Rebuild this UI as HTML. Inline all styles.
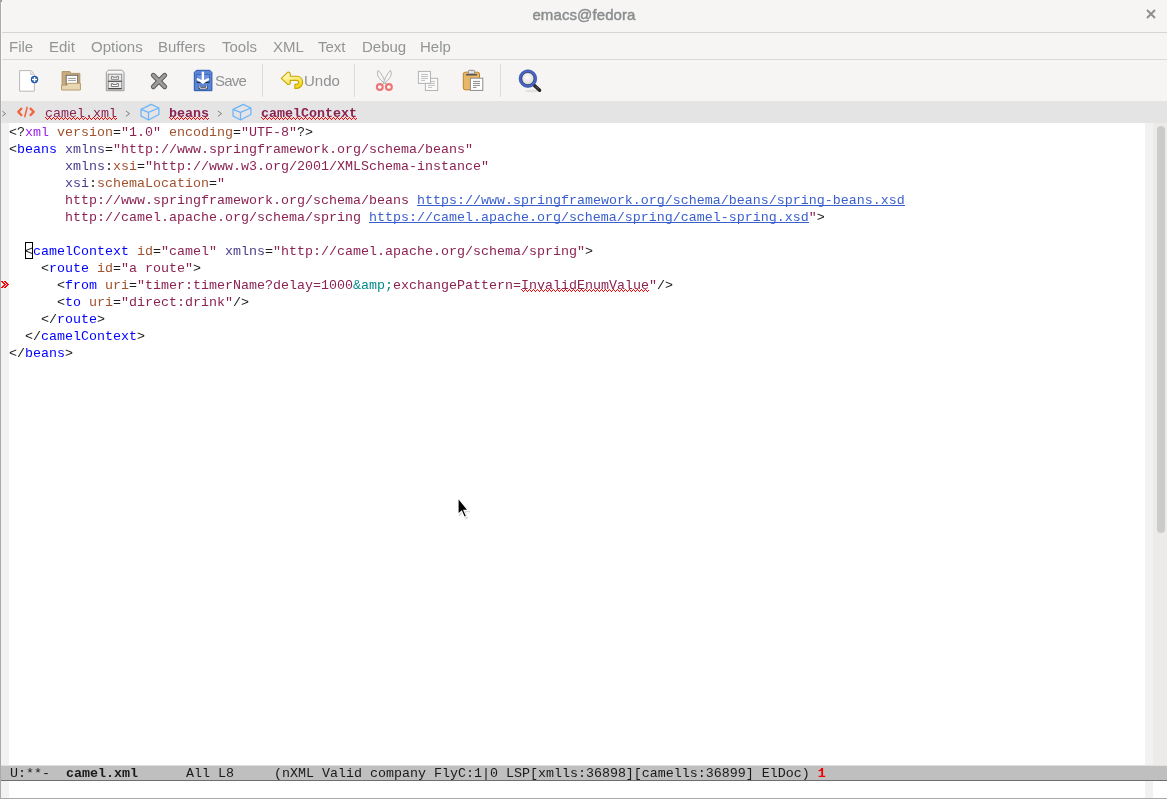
<!DOCTYPE html>
<html><head><meta charset="utf-8">
<style>
*{margin:0;padding:0;box-sizing:border-box}
html,body{width:1167px;height:799px;overflow:hidden;background:#f6f5f4;position:relative}
.abs{position:absolute}
.mono,.mi,.tl,.t{will-change:transform}
#lborder{left:0;top:0;width:1px;height:799px;background:#a9a9a9}
#title{left:1px;top:0;width:1166px;height:33px;background:#f6f5f4;border-bottom:1px solid #d8d4d0}
#title .t{position:absolute;left:0;width:1166px;top:6px;text-align:center;font:15px "Liberation Sans",sans-serif;color:#8a8d8e;-webkit-text-stroke:0.45px #8a8d8e;letter-spacing:0.1px}
#close{left:1143px;top:9px;width:14px;height:14px}
#menu{left:1px;top:33px;width:1166px;height:27px;border-bottom:1px solid #dcd8d4}
.mi{position:absolute;top:5px;font:15px "Liberation Sans",sans-serif;color:#929595}
#tool{left:1px;top:60px;width:1166px;height:41px}
.sep{position:absolute;top:64px;width:1px;height:33px;background:#dedbd8}
.tl{position:absolute;top:72px;font:15px "Liberation Sans",sans-serif;color:#8f9192}
#hdr{left:1px;top:101px;width:1166px;height:22px;background:#e4e4e4}
.mono{font-family:"Liberation Mono",monospace;font-size:13.333px;white-space:pre;line-height:17px}
#text{left:1px;top:123px;width:1144px;height:642px;background:#fff}
#lfr{left:1px;top:123px;width:8px;height:642px;background:#f2f2f2}
#rfr{left:1145px;top:123px;width:8px;height:642px;background:#f2f2f2}
#sb{left:1153px;top:123px;width:14px;height:642px;background:#edebe9}
#thumb{left:1157px;top:126px;width:8px;height:407px;background:#cbcbcb;border-radius:4px}
#code{left:9px;top:124px;color:#2b2b2b}
#ml{left:1px;top:765px;width:1166px;height:16px;background:#bfbfbf;border-top:1px solid #e0e0e0;border-bottom:1px solid #6e6e6e}
#echo{left:1px;top:781px;width:1166px;height:17px;background:#fff}
#efl{left:1px;top:781px;width:8px;height:17px;background:#f2f2f2}
#efr{left:1145px;top:781px;width:8px;height:17px;background:#f2f2f2}
#bb{left:0;top:798px;width:1167px;height:1px;background:#a9a9a9}
.k{color:#1c1c1c}
.kw{color:#a020f0}
.fn{color:#0000ff}
.at{color:#a0522d}
.ns{color:#483d8b}
.st{color:#8b2252}
.cn{color:#008b8b}
.ln{color:#3a5fcd}
</style></head><body>
<div id="title" class="abs"><div class="t">emacs@fedora</div></div>
<div id="menu" class="abs"></div>
<div class="mi" style="left:9px;top:38px">File</div>
<div class="mi" style="left:49px;top:38px">Edit</div>
<div class="mi" style="left:91px;top:38px">Options</div>
<div class="mi" style="left:158px;top:38px">Buffers</div>
<div class="mi" style="left:222px;top:38px">Tools</div>
<div class="mi" style="left:273px;top:38px">XML</div>
<div class="mi" style="left:318px;top:38px">Text</div>
<div class="mi" style="left:362px;top:38px">Debug</div>
<div class="mi" style="left:420px;top:38px">Help</div>

<div class="sep" style="left:262px"></div>
<div class="sep" style="left:354px"></div>
<div class="sep" style="left:500px"></div>
<div class="tl" style="left:215px;letter-spacing:-0.8px">Save</div>
<div class="tl" style="left:304px">Undo</div>

<div id="hdr" class="abs"></div>
<div class="abs mono hd" style="left:45px;top:105px;color:#8b2252">camel.xml</div>
<div class="abs mono hd" style="left:169px;top:105px;color:#8b2252;font-weight:bold">beans</div>
<div class="abs mono hd" style="left:261px;top:105px;color:#8b2252;font-weight:bold">camelContext</div>
<div id="text" class="abs"></div>
<div id="lfr" class="abs"></div>
<div id="rfr" class="abs"></div>
<div id="sb" class="abs"></div>
<div id="thumb" class="abs"></div>
<svg class="abs" style="left:0;top:0" width="1167" height="130">
<defs>
<linearGradient id="gcab" x1="0" y1="0" x2="0" y2="1"><stop offset="0" stop-color="#fafafa"/><stop offset="1" stop-color="#d6d6d6"/></linearGradient>
<radialGradient id="glens" cx="0.45" cy="0.4" r="0.6"><stop offset="0" stop-color="#ffffff"/><stop offset="1" stop-color="#d8d8d8"/></radialGradient>
<linearGradient id="gundo" x1="0" y1="0" x2="0.4" y2="1"><stop offset="0" stop-color="#fffbd8"/><stop offset="0.5" stop-color="#fbef8a"/><stop offset="1" stop-color="#f2d820"/></linearGradient>
</defs>
<!-- close x -->
<path d="M1147,10 L1155,18 M1155,10 L1147,18" stroke="#8c8c8c" stroke-width="1.8"/>
<!-- new file -->
<path d="M19.6,70.6 H31.2 L34.3,74.6 V91.2 H19.6 Z" fill="#fff" stroke="#b8b8b8" stroke-width="1"/>
<path d="M30.6,71.5 V74.5 H33.3" fill="#eee" stroke="#c8c8c8" stroke-width="1"/>
<circle cx="34.5" cy="79.5" r="3.7" fill="#2158aa"/>
<path d="M32,79.5 H37 M34.5,77 V82" stroke="#fff" stroke-width="1.4"/>
<!-- open folder -->
<path d="M62.1,89.5 V71.6 H70 L71.1,73.4 H79.8 V89.5 Z" fill="#c9ab7e" stroke="#b09266" stroke-width="1"/>
<rect x="66.2" y="75.3" width="11.5" height="9" fill="#fff" stroke="#6a6a6a" stroke-width="1"/>
<path d="M68.2,78.4 H76 M68.2,80.4 H76" stroke="#9a9a9a" stroke-width="1"/>
<path d="M61.6,90 V85.1 H67 L68,83.3 H80.4 V90 Z" fill="#e9d6b2" stroke="#b89c6e" stroke-width="1" stroke-linejoin="round"/>
<!-- cabinet -->
<path d="M106.3,90.7 V72.2 L108.5,70.2 H121.8 L124,72.2 V90.7 Z" fill="url(#gcab)" stroke="#999" stroke-width="1"/>
<rect x="108.2" y="74.2" width="13.5" height="7.2" fill="#eaeaea" stroke="#8e8e8e" stroke-width="1"/>
<rect x="108.2" y="81.4" width="13.5" height="7.2" fill="#eaeaea" stroke="#8e8e8e" stroke-width="1"/>
<path d="M108.2,81.2 H121.7 M108.2,88.6 H121.7" stroke="#4a4a4a" stroke-width="1.1"/>
<path d="M111.4,76.4 H113 V77.3 H116.8 V76.4 H118.4 V79.3 H111.4 Z" fill="#fff" stroke="#707070" stroke-width="0.9" stroke-linejoin="round"/>
<path d="M111.4,83.6 H113 V84.5 H116.8 V83.6 H118.4 V86.5 H111.4 Z" fill="#fff" stroke="#707070" stroke-width="0.9" stroke-linejoin="round"/>
<!-- X -->
<path d="M153.3,75.3 L164.7,86.7 M164.7,75.3 L153.3,86.7" stroke="#5a5a5a" stroke-width="4.9" stroke-linecap="round"/>
<path d="M153.3,75.3 L164.7,86.7 M164.7,75.3 L153.3,86.7" stroke="#9d9d9d" stroke-width="2.9" stroke-linecap="round"/>
<!-- save -->
<path d="M194.3,90.7 V72.4 L196.4,70.3 H209.9 L211.9,72.4 V90.7 Z" fill="#5b84d6" stroke="#2458a8" stroke-width="1"/>
<rect x="196.8" y="74.5" width="12.6" height="8.3" fill="#6a90de" stroke="#3a66b8" stroke-width="0.8"/>
<path d="M197,82.3 H209.2" stroke="#2a2a2a" stroke-width="1.2"/>
<path d="M202.9,72.6 V81.5 M197.8,79.3 Q200.5,80.2 202.9,82.6 Q205.3,80.2 208,79.3" stroke="#fff" stroke-width="2.4" fill="none" stroke-linecap="round" stroke-linejoin="round"/>
<path d="M199.9,85.4 V88.2 H206.3 V85.4" fill="none" stroke="#2a2a2a" stroke-width="2.2"/>
<path d="M199.9,85.4 V88.2 H206.3 V85.4" fill="none" stroke="#fff" stroke-width="1"/>
<!-- undo -->
<path d="M281.3,78.4 L287.6,72.3 Q289.3,71.6 290.2,73.3 L290.3,76.3 H297 C300.5,76.3 302.6,79 302.6,82.4 C302.6,85.8 299.5,88.5 296,88.5 H294.9 V84.3 H296 C297.6,84.3 298.6,83.3 298.6,82.4 C298.6,81.4 297.8,80.4 296.5,80.4 H290.3 L290.2,83.4 Q289.3,85 287.6,84.4 Z" fill="url(#gundo)" stroke="#c8a400" stroke-width="1.1" stroke-linejoin="round"/>
<!-- scissors -->
<path d="M378.2,70.4 C376.3,74.5 377.8,78.5 386,84.2 C384,78.5 381.8,73.8 378.2,70.4 Z" fill="#f6f6f6" stroke="#a8a8a8" stroke-width="0.85"/>
<path d="M390.5,70.4 C392.4,74.5 390.9,78.5 383,84.2 C384.8,78.5 387,73.8 390.5,70.4 Z" fill="#f6f6f6" stroke="#a8a8a8" stroke-width="0.85"/>
<circle cx="379.8" cy="87" r="2.9" fill="#fff" fill-opacity="0.6" stroke="#ec7474" stroke-width="2.1"/>
<circle cx="388.9" cy="87" r="2.9" fill="#fff" fill-opacity="0.6" stroke="#ec7474" stroke-width="2.1"/>
<!-- copy -->
<rect x="425.4" y="78.3" width="12.3" height="12.2" fill="#fafafa" stroke="#b3b3b3" stroke-width="1"/>
<path d="M428,81.4 H435 M428,83.4 H435 M428,85.4 H435 M428,87.4 H432" stroke="#c0c0c0" stroke-width="1"/>
<rect x="418.4" y="71.4" width="12.1" height="12" fill="#fafafa" stroke="#b3b3b3" stroke-width="1"/>
<path d="M421,74.4 H428 M421,76.4 H428 M421,78.4 H428 M421,80.4 H425" stroke="#c0c0c0" stroke-width="1"/>
<!-- paste -->
<rect x="463.3" y="72.2" width="16.2" height="17.6" rx="1.8" fill="#e9b665" stroke="#b9832e" stroke-width="1"/>
<rect x="468.3" y="70.3" width="6.4" height="3.6" rx="1" fill="#e4e4e4" stroke="#8a8a8a" stroke-width="1"/>
<path d="M466.5,74.8 H476.5" stroke="#555" stroke-width="1.5" stroke-linecap="round"/>
<rect x="470.4" y="78.2" width="12.4" height="12.2" fill="#fff" stroke="#8d8d8d" stroke-width="1"/>
<path d="M473,81.4 H480 M473,83.4 H480 M473,85.4 H480 M473,87.4 H476.5" stroke="#8a8a8a" stroke-width="1"/>
<!-- search -->
<ellipse cx="532" cy="91" rx="7" ry="1.5" fill="#000" opacity="0.08"/>
<circle cx="527.9" cy="78.6" r="6.2" fill="url(#glens)"/>
<path d="M533.9,85 L539.6,90.3" stroke="#252525" stroke-width="3.4" stroke-linecap="round"/>
<circle cx="527.9" cy="78.6" r="7.5" fill="none" stroke="#4566c8" stroke-width="2.9"/>
<circle cx="527.9" cy="78.6" r="8.8" fill="none" stroke="#2b4390" stroke-width="0.7" opacity="0.8"/>
<circle cx="527.9" cy="78.6" r="6.1" fill="none" stroke="#202040" stroke-width="0.9" opacity="0.75"/>
<path d="M535.6,86.2 L538.6,89" stroke="#6a6a6a" stroke-width="0.8" stroke-linecap="round"/>
<!-- header line -->
<path d="M2.3,111.2 L5.6,113.6 L2.3,116.2" fill="none" stroke="#7d7d7d" stroke-width="1"/>
<path d="M22,108 L18.3,111.9 L22,115.8 M29.9,108 L33.7,111.9 L29.9,115.8" fill="none" stroke="#f2643f" stroke-width="2.3" stroke-linejoin="round"/>
<path d="M27.3,106.8 L24.6,117.2" stroke="#f2643f" stroke-width="1.5"/>
<path d="M125.9,111 L129.6,113.6 L125.9,116.3 M217.9,111 L221.6,113.6 L217.9,116.3" fill="none" stroke="#7d7d7d" stroke-width="1"/>
<path d="M151.3,104.3 L141,109.3 L148.5,112.4 L158.9,108 Z M141,109.3 V115.9 L148.5,120 L158.9,114.5 V108 M148.5,112.4 V120" fill="none" stroke="#6fb4fb" stroke-width="1.3" stroke-linejoin="round"/>
<path d="M243.3,104.3 L233,109.3 L240.5,112.4 L250.9,108 Z M233,109.3 V115.9 L240.5,120 L250.9,114.5 V108 M240.5,112.4 V120" fill="none" stroke="#6fb4fb" stroke-width="1.3" stroke-linejoin="round"/>
</svg>
<div id="code" class="abs mono"><span class="k">&lt;?</span><span class="kw">xml</span> <span class="at">version</span><span class="k">=</span><span class="st">"1.0"</span> <span class="at">encoding</span><span class="k">=</span><span class="st">"UTF-8"</span><span class="k">?&gt;</span>
<span class="k">&lt;</span><span class="fn">beans</span> <span class="ns">xmlns</span><span class="k">=</span><span class="st">"http://www.springframework.org/schema/beans"</span>
       <span class="ns">xmlns</span><span class="k">:</span><span class="at">xsi</span><span class="k">=</span><span class="st">"http://www.w3.org/2001/XMLSchema-instance"</span>
       <span class="ns">xsi</span><span class="k">:</span><span class="at">schemaLocation</span><span class="k">=</span><span class="st">"</span>
<span class="st">       http://www.springframework.org/schema/beans </span><span class="ln">https://www.springframework.org/schema/beans/spring-beans.xsd</span>
<span class="st">       http://camel.apache.org/schema/spring </span><span class="ln">https://camel.apache.org/schema/spring/camel-spring.xsd</span><span class="st">"</span><span class="k">&gt;</span>

  <span class="k">&lt;</span><span class="fn">camelContext</span> <span class="at">id</span><span class="k">=</span><span class="st">"camel"</span> <span class="ns">xmlns</span><span class="k">=</span><span class="st">"http://camel.apache.org/schema/spring"</span><span class="k">&gt;</span>
    <span class="k">&lt;</span><span class="fn">route</span> <span class="at">id</span><span class="k">=</span><span class="st">"a route"</span><span class="k">&gt;</span>
      <span class="k">&lt;</span><span class="fn">from</span> <span class="at">uri</span><span class="k">=</span><span class="st">"timer:timerName?delay=1000</span><span class="cn">&amp;amp;</span><span class="st">exchangePattern=InvalidEnumValue"</span><span class="k">/&gt;</span>
      <span class="k">&lt;</span><span class="fn">to</span> <span class="at">uri</span><span class="k">=</span><span class="st">"direct:drink"</span><span class="k">/&gt;</span>
    <span class="k">&lt;/</span><span class="fn">route</span><span class="k">&gt;</span>
  <span class="k">&lt;/</span><span class="fn">camelContext</span><span class="k">&gt;</span>
<span class="k">&lt;/</span><span class="fn">beans</span><span class="k">&gt;</span></div>

<svg class="abs" style="left:0;top:0" width="1167" height="300" shape-rendering="crispEdges">
<path d="M45,117h1v1h-1zM46,118h1v1h-1zM47,119h1v1h-1zM48,118h1v1h-1zM49,117h1v1h-1zM50,118h1v1h-1zM51,119h1v1h-1zM52,118h1v1h-1zM53,117h1v1h-1zM54,118h1v1h-1zM55,119h1v1h-1zM56,118h1v1h-1zM57,117h1v1h-1zM58,118h1v1h-1zM59,119h1v1h-1zM60,118h1v1h-1zM61,117h1v1h-1zM62,118h1v1h-1zM63,119h1v1h-1zM64,118h1v1h-1zM65,117h1v1h-1zM66,118h1v1h-1zM67,119h1v1h-1zM68,118h1v1h-1zM69,117h1v1h-1zM70,118h1v1h-1zM71,119h1v1h-1zM72,118h1v1h-1zM73,117h1v1h-1zM74,118h1v1h-1zM75,119h1v1h-1zM76,118h1v1h-1zM77,117h1v1h-1zM78,118h1v1h-1zM79,119h1v1h-1zM80,118h1v1h-1zM81,117h1v1h-1zM82,118h1v1h-1zM83,119h1v1h-1zM84,118h1v1h-1zM85,117h1v1h-1zM86,118h1v1h-1zM87,119h1v1h-1zM88,118h1v1h-1zM89,117h1v1h-1zM90,118h1v1h-1zM91,119h1v1h-1zM92,118h1v1h-1zM93,117h1v1h-1zM94,118h1v1h-1zM95,119h1v1h-1zM96,118h1v1h-1zM97,117h1v1h-1zM98,118h1v1h-1zM99,119h1v1h-1zM100,118h1v1h-1zM101,117h1v1h-1zM102,118h1v1h-1zM103,119h1v1h-1zM104,118h1v1h-1zM105,117h1v1h-1zM106,118h1v1h-1zM107,119h1v1h-1zM108,118h1v1h-1zM109,117h1v1h-1zM110,118h1v1h-1zM111,119h1v1h-1zM112,118h1v1h-1zM113,117h1v1h-1zM114,118h1v1h-1zM115,119h1v1h-1zM116,118h1v1h-1zM169,117h1v1h-1zM170,118h1v1h-1zM171,119h1v1h-1zM172,118h1v1h-1zM173,117h1v1h-1zM174,118h1v1h-1zM175,119h1v1h-1zM176,118h1v1h-1zM177,117h1v1h-1zM178,118h1v1h-1zM179,119h1v1h-1zM180,118h1v1h-1zM181,117h1v1h-1zM182,118h1v1h-1zM183,119h1v1h-1zM184,118h1v1h-1zM185,117h1v1h-1zM186,118h1v1h-1zM187,119h1v1h-1zM188,118h1v1h-1zM189,117h1v1h-1zM190,118h1v1h-1zM191,119h1v1h-1zM192,118h1v1h-1zM193,117h1v1h-1zM194,118h1v1h-1zM195,119h1v1h-1zM196,118h1v1h-1zM197,117h1v1h-1zM198,118h1v1h-1zM199,119h1v1h-1zM200,118h1v1h-1zM201,117h1v1h-1zM202,118h1v1h-1zM203,119h1v1h-1zM204,118h1v1h-1zM205,117h1v1h-1zM206,118h1v1h-1zM207,119h1v1h-1zM208,118h1v1h-1zM261,117h1v1h-1zM262,118h1v1h-1zM263,119h1v1h-1zM264,118h1v1h-1zM265,117h1v1h-1zM266,118h1v1h-1zM267,119h1v1h-1zM268,118h1v1h-1zM269,117h1v1h-1zM270,118h1v1h-1zM271,119h1v1h-1zM272,118h1v1h-1zM273,117h1v1h-1zM274,118h1v1h-1zM275,119h1v1h-1zM276,118h1v1h-1zM277,117h1v1h-1zM278,118h1v1h-1zM279,119h1v1h-1zM280,118h1v1h-1zM281,117h1v1h-1zM282,118h1v1h-1zM283,119h1v1h-1zM284,118h1v1h-1zM285,117h1v1h-1zM286,118h1v1h-1zM287,119h1v1h-1zM288,118h1v1h-1zM289,117h1v1h-1zM290,118h1v1h-1zM291,119h1v1h-1zM292,118h1v1h-1zM293,117h1v1h-1zM294,118h1v1h-1zM295,119h1v1h-1zM296,118h1v1h-1zM297,117h1v1h-1zM298,118h1v1h-1zM299,119h1v1h-1zM300,118h1v1h-1zM301,117h1v1h-1zM302,118h1v1h-1zM303,119h1v1h-1zM304,118h1v1h-1zM305,117h1v1h-1zM306,118h1v1h-1zM307,119h1v1h-1zM308,118h1v1h-1zM309,117h1v1h-1zM310,118h1v1h-1zM311,119h1v1h-1zM312,118h1v1h-1zM313,117h1v1h-1zM314,118h1v1h-1zM315,119h1v1h-1zM316,118h1v1h-1zM317,117h1v1h-1zM318,118h1v1h-1zM319,119h1v1h-1zM320,118h1v1h-1zM321,117h1v1h-1zM322,118h1v1h-1zM323,119h1v1h-1zM324,118h1v1h-1zM325,117h1v1h-1zM326,118h1v1h-1zM327,119h1v1h-1zM328,118h1v1h-1zM329,117h1v1h-1zM330,118h1v1h-1zM331,119h1v1h-1zM332,118h1v1h-1zM333,117h1v1h-1zM334,118h1v1h-1zM335,119h1v1h-1zM336,118h1v1h-1zM337,117h1v1h-1zM338,118h1v1h-1zM339,119h1v1h-1zM340,118h1v1h-1zM341,117h1v1h-1zM342,118h1v1h-1zM343,119h1v1h-1zM344,118h1v1h-1zM345,117h1v1h-1zM346,118h1v1h-1zM347,119h1v1h-1zM348,118h1v1h-1zM349,117h1v1h-1zM350,118h1v1h-1zM351,119h1v1h-1zM352,118h1v1h-1zM353,117h1v1h-1zM354,118h1v1h-1zM355,119h1v1h-1zM356,118h1v1h-1zM521,289h1v1h-1zM522,290h1v1h-1zM523,291h1v1h-1zM524,290h1v1h-1zM525,289h1v1h-1zM526,290h1v1h-1zM527,291h1v1h-1zM528,290h1v1h-1zM529,289h1v1h-1zM530,290h1v1h-1zM531,291h1v1h-1zM532,290h1v1h-1zM533,289h1v1h-1zM534,290h1v1h-1zM535,291h1v1h-1zM536,290h1v1h-1zM537,289h1v1h-1zM538,290h1v1h-1zM539,291h1v1h-1zM540,290h1v1h-1zM541,289h1v1h-1zM542,290h1v1h-1zM543,291h1v1h-1zM544,290h1v1h-1zM545,289h1v1h-1zM546,290h1v1h-1zM547,291h1v1h-1zM548,290h1v1h-1zM549,289h1v1h-1zM550,290h1v1h-1zM551,291h1v1h-1zM552,290h1v1h-1zM553,289h1v1h-1zM554,290h1v1h-1zM555,291h1v1h-1zM556,290h1v1h-1zM557,289h1v1h-1zM558,290h1v1h-1zM559,291h1v1h-1zM560,290h1v1h-1zM561,289h1v1h-1zM562,290h1v1h-1zM563,291h1v1h-1zM564,290h1v1h-1zM565,289h1v1h-1zM566,290h1v1h-1zM567,291h1v1h-1zM568,290h1v1h-1zM569,289h1v1h-1zM570,290h1v1h-1zM571,291h1v1h-1zM572,290h1v1h-1zM573,289h1v1h-1zM574,290h1v1h-1zM575,291h1v1h-1zM576,290h1v1h-1zM577,289h1v1h-1zM578,290h1v1h-1zM579,291h1v1h-1zM580,290h1v1h-1zM581,289h1v1h-1zM582,290h1v1h-1zM583,291h1v1h-1zM584,290h1v1h-1zM585,289h1v1h-1zM586,290h1v1h-1zM587,291h1v1h-1zM588,290h1v1h-1zM589,289h1v1h-1zM590,290h1v1h-1zM591,291h1v1h-1zM592,290h1v1h-1zM593,289h1v1h-1zM594,290h1v1h-1zM595,291h1v1h-1zM596,290h1v1h-1zM597,289h1v1h-1zM598,290h1v1h-1zM599,291h1v1h-1zM600,290h1v1h-1zM601,289h1v1h-1zM602,290h1v1h-1zM603,291h1v1h-1zM604,290h1v1h-1zM605,289h1v1h-1zM606,290h1v1h-1zM607,291h1v1h-1zM608,290h1v1h-1zM609,289h1v1h-1zM610,290h1v1h-1zM611,291h1v1h-1zM612,290h1v1h-1zM613,289h1v1h-1zM614,290h1v1h-1zM615,291h1v1h-1zM616,290h1v1h-1zM617,289h1v1h-1zM618,290h1v1h-1zM619,291h1v1h-1zM620,290h1v1h-1zM621,289h1v1h-1zM622,290h1v1h-1zM623,291h1v1h-1zM624,290h1v1h-1zM625,289h1v1h-1zM626,290h1v1h-1zM627,291h1v1h-1zM628,290h1v1h-1zM629,289h1v1h-1zM630,290h1v1h-1zM631,291h1v1h-1zM632,290h1v1h-1zM633,289h1v1h-1zM634,290h1v1h-1zM635,291h1v1h-1zM636,290h1v1h-1zM637,289h1v1h-1zM638,290h1v1h-1zM639,291h1v1h-1zM640,290h1v1h-1zM641,289h1v1h-1zM642,290h1v1h-1zM643,291h1v1h-1zM644,290h1v1h-1zM645,289h1v1h-1zM646,290h1v1h-1zM647,291h1v1h-1zM648,290h1v1h-1z" fill="#ff0000"/>
<rect x="417" y="205" width="488" height="1" fill="#3a5fcd"/>
<rect x="369" y="222" width="440" height="1" fill="#3a5fcd"/>
<rect x="25.5" y="242.5" width="7" height="16" fill="none" stroke="#000" stroke-width="1"/>
<path d="M1,281h2v1h-2zM4,281h2v1h-2zM2,282h2v1h-2zM5,282h2v1h-2zM3,283h2v1h-2zM6,283h2v1h-2zM4,284h2v1h-2zM7,284h2v1h-2zM3,285h2v1h-2zM6,285h2v1h-2zM2,286h2v1h-2zM5,286h2v1h-2zM1,287h2v1h-2zM4,287h2v1h-2z" fill="#f00"/>
</svg>
<div id="ml" class="abs"></div>
<div class="abs mono" style="left:10px;top:765px;color:#1a1a1a">U:**-  <b>camel.xml</b>      All L8     (nXML Valid company FlyC:1|0 LSP[xmlls:36898][camells:36899] ElDoc) <b style="color:#e00">1</b></div>
<div id="echo" class="abs"></div>
<div id="efl" class="abs"></div>
<div id="efr" class="abs"></div>
<svg class="abs" style="left:450px;top:495px" width="20" height="26">
<path d="M8.2,2.8 V21 L12,17.6 L14.6,23.6 L17.6,22.4 L15,16.5 H20 Z" fill="#000" opacity="0.15" transform="translate(0.6,0.8)"/>
<path d="M7.6,2.2 V20.4 L11.4,17 L14,23 L17,21.8 L14.4,15.9 H19.4 Z" fill="#fff"/>
<path d="M8.6,4.6 V18 L11.8,15.2 L14.6,21.6 L15.8,21.1 L13,14.8 H17 Z" fill="#000"/>
</svg>
<div id="lborder" class="abs"></div><div class="abs" style="left:1px;top:0;width:1px;height:101px;background:#fbfbfa"></div><div class="abs" style="left:1px;top:101px;width:1px;height:22px;background:#e9e9e9"></div>
<div id="bb" class="abs"></div>
<div class="abs" style="left:1px;top:0;width:1px;height:2px;background:#8f8f8f"></div>
</body></html>
